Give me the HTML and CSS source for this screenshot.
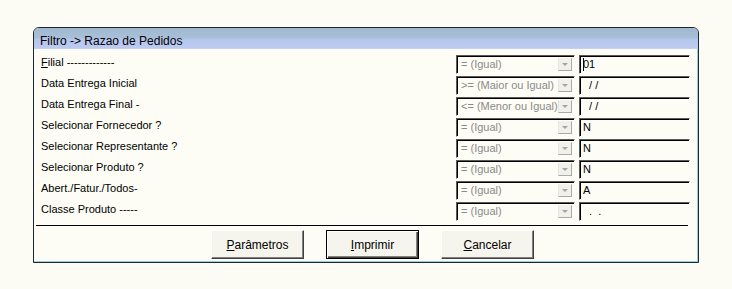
FILE: index.html
```html
<!DOCTYPE html>
<html lang="pt">
<head>
  <meta charset="UTF-8" />
  <title>Filtro -> Razao de Pedidos</title>
  <link rel="stylesheet" href="styles.css">
</head>
<body>
  <div class="janela">
    <div class="titulo">Filtro -&gt; Razao de Pedidos</div>

    <div class="campos">
      <div class="linha">
        <label><u>F</u>ilial -------------</label>
        <div class="combo"><span>= (Igual)</span><i class="seta"></i></div>
        <div class="entrada"><b class="cursor"></b>01</div>
      </div>
      <div class="linha">
        <label>Data Entrega Inicial</label>
        <div class="combo"><span>&gt;= (Maior ou Igual)</span><i class="seta"></i></div>
        <div class="entrada">  / /</div>
      </div>
      <div class="linha">
        <label>Data Entrega Final -</label>
        <div class="combo"><span>&lt;= (Menor ou Igual)</span><i class="seta"></i></div>
        <div class="entrada">  / /</div>
      </div>
      <div class="linha">
        <label>Selecionar Fornecedor ?</label>
        <div class="combo"><span>= (Igual)</span><i class="seta"></i></div>
        <div class="entrada">N</div>
      </div>
      <div class="linha">
        <label>Selecionar Representante ?</label>
        <div class="combo"><span>= (Igual)</span><i class="seta"></i></div>
        <div class="entrada">N</div>
      </div>
      <div class="linha">
        <label>Selecionar Produto ?</label>
        <div class="combo"><span>= (Igual)</span><i class="seta"></i></div>
        <div class="entrada">N</div>
      </div>
      <div class="linha">
        <label>Abert./Fatur./Todos-</label>
        <div class="combo"><span>= (Igual)</span><i class="seta"></i></div>
        <div class="entrada">A</div>
      </div>
      <div class="linha">
        <label>Classe Produto -----</label>
        <div class="combo"><span>= (Igual)</span><i class="seta"></i></div>
        <div class="entrada">  .  .</div>
      </div>
    </div>

    <div class="divisor"></div>

    <div class="botoes">
      <button><u>P</u>arâmetros</button>
      <button class="padrao"><u>I</u>mprimir</button>
      <button><u>C</u>ancelar</button>
    </div>
  </div>
</body>
</html>
```

FILE: styles.css
```css
body {
  margin: 0;
  padding: 27px 0 0 33px;
  background: #fcfcf5;
  font-family: 'Liberation Sans', Arial, sans-serif;
  font-size: 11px;
  color: #000;
}

.janela {
  width: 664px;
  border: 1px solid #1b2733;
  border-radius: 6px 6px 0 0;
  background: #fdfdf6;
  padding-bottom: 3px;
  box-shadow: inset -1px -1px 0 #98cfe0;
}

.titulo {
  height: 21px;
  box-sizing: border-box;
  padding: 6px 0 0 6px;
  font-size: 12px;
  line-height: 14px;
  border-radius: 5px 5px 0 0;
  background: linear-gradient(#9fb8cf 0%, #a8bfd8 45%, #b6c6ec 55%, #bccaf0 95%, #c6d6f2 100%);
}

.campos {
  padding: 5px 8px 0 7px;
}

.linha {
  display: grid;
  grid-template-columns: 1fr 119px 111px;
  column-gap: 4px;
  height: 21px;
}

.linha label {
  padding-top: 2px;
  line-height: 13px;
  white-space: pre;
}

.combo {
  display: flex;
  height: 19px;
  margin-top: 1px;
  box-sizing: border-box;
  border: 1px solid;
  border-color: #5a5a5a #fdfdf6 #fdfdf6 #5a5a5a;
  box-shadow: inset 1px 1px 0 #000;
  background: #fdfdf6;
}

.combo span {
  flex: 1;
  padding-left: 4px;
  line-height: 17px;
  color: #8a8a8a;
  white-space: nowrap;
  overflow: hidden;
}

.seta {
  width: 14px;
  margin: 2px 2px 2px 0;
  box-sizing: border-box;
  border: 1px solid;
  border-color: #f2f2ee #a9a9a9 #a9a9a9 #e6e6e0;
  background: #f1f1ec;
  display: flex;
  align-items: center;
  justify-content: center;
}

.seta::after {
  content: '';
  border-left: 3px solid transparent;
  border-right: 3px solid transparent;
  border-top: 3px solid #a4a4a4;
}

.entrada {
  position: relative;
  height: 19px;
  margin-top: 1px;
  box-sizing: border-box;
  border: 1px solid;
  border-color: #5a5a5a #fdfdf6 #fdfdf6 #5a5a5a;
  box-shadow: inset 1px 1px 0 #000;
  padding-left: 3px;
  line-height: 17px;
  white-space: pre;
}

.cursor {
  position: absolute;
  left: 3px;
  top: 2px;
  width: 1px;
  height: 13px;
  background: #000;
}

.divisor {
  height: 1px;
  background: #000;
  margin: 3px 10px 0 2px;
}

.botoes {
  display: flex;
  gap: 22px;
  padding: 4px 0 0 177px;
}

.botoes button {
  width: 93px;
  height: 29px;
  font-family: 'Liberation Sans', Arial, sans-serif;
  font-size: 12px;
  color: #000;
  background: #f6f5ed;
  border: 1px solid;
  border-color: #fff #404040 #404040 #fff;
  box-shadow: inset -1px -1px 0 #808080;
  padding: 0;
}

.botoes button.padrao {
  border-color: #000;
  box-shadow: inset 1px 1px 0 #fff, inset -1px -1px 0 #404040, inset -2px -2px 0 #808080;
}
```
